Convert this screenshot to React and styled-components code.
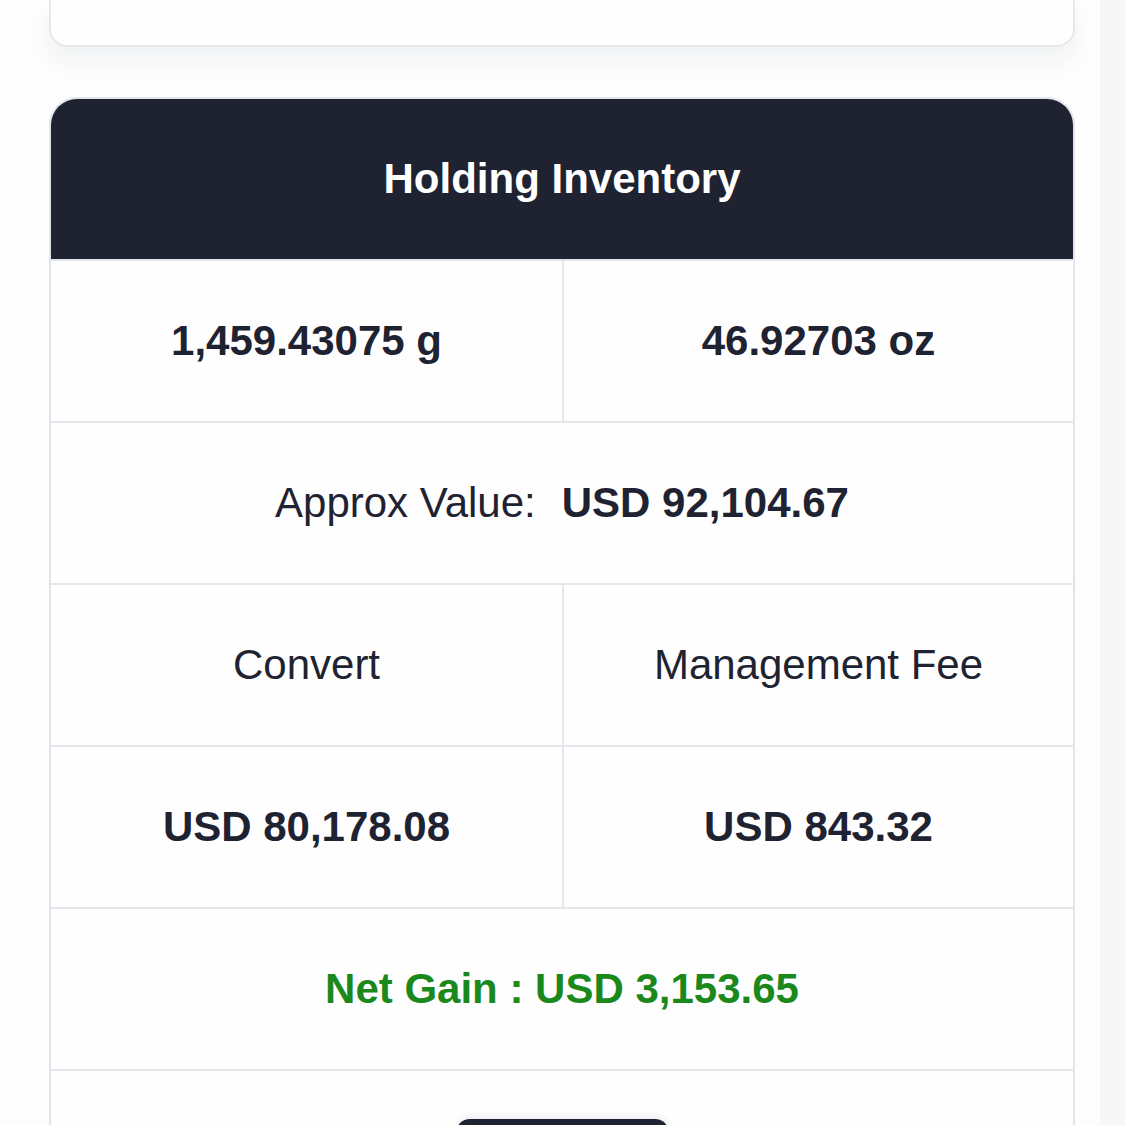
import React from 'react';
import styled, { createGlobalStyle } from 'styled-components';

const GlobalStyle = createGlobalStyle`
  html, body {
    margin: 0;
    padding: 0;
    background: #fdfdfd;
    font-family: "Liberation Sans", Arial, Helvetica, sans-serif;
    color: #1f2331;
  }
  #root {
    height: 1125px;
    overflow: hidden;
  }
`;

const Page = styled.div`
  display: flex;
  height: 1125px;
`;

const Main = styled.div`
  width: 1100px;
  padding: 0 25px 0 49px;
  box-sizing: border-box;
  display: flex;
  flex-direction: column;
`;

const SideStrip = styled.div`
  flex: 1;
  background: #f7f7f8;
`;

const TopCard = styled.div`
  flex: none;
  height: 47px;
  background: #fefefe;
  border: 2px solid #e6e8ec;
  border-top: none;
  border-radius: 0 0 18px 18px;
  box-sizing: border-box;
  box-shadow: 0 14px 22px rgba(20, 30, 50, 0.05);
`;

const InventoryCard = styled.div`
  margin-top: 50px;
  border: 2px solid #e2e5eb;
  border-bottom: none;
  border-radius: 28px 28px 0 0;
  overflow: hidden;
  background: #fefefe;
`;

const Header = styled.div`
  height: 160px;
  background: #1f2331;
  display: flex;
  align-items: center;
  justify-content: center;
  border-bottom: 2px solid #dfe3ec;
`;

const HeaderTitle = styled.h2`
  margin: 0;
  color: #ffffff;
  font-size: 42px;
  font-weight: 700;
`;

const Row = styled.div`
  display: grid;
  grid-template-columns: ${({ split }) => (split ? '1fr 1fr' : '1fr')};
  border-bottom: 2px solid #e3e6eb;
`;

const Cell = styled.div`
  height: 160px;
  display: flex;
  align-items: center;
  justify-content: center;
  font-size: 42px;
  font-weight: ${({ bold }) => (bold ? 700 : 400)};
  color: ${({ tone }) => (tone === 'green' ? '#1b881c' : '#1f2331')};
  & + & {
    border-left: 2px solid #e3e6eb;
  }
`;

const Label = styled.span`
  font-weight: 400;
  margin-right: 26px;
`;

const Value = styled.span`
  font-weight: 700;
`;

const ActionRow = styled.div`
  display: flex;
  justify-content: center;
  padding-top: 48px;
  height: 120px;
`;

const ActionButton = styled.button`
  width: 213px;
  height: 56px;
  border: none;
  border-radius: 14px;
  background: #1f2331;
  box-shadow: 0 -4px 6px rgba(20, 30, 50, 0.06);
`;

const rows = [
  { cells: [{ text: 'Convert' }, { text: 'Management Fee' }] },
  { cells: [{ text: 'USD 80,178.08', bold: true }, { text: 'USD 843.32', bold: true }] },
];

const App = () => (
  <>
    <GlobalStyle />
    <Page>
      <Main>
        <TopCard />
        <InventoryCard>
          <Header>
            <HeaderTitle>Holding Inventory</HeaderTitle>
          </Header>
          <Row split>
            <Cell bold>1,459.43075 g</Cell>
            <Cell bold>46.92703 oz</Cell>
          </Row>
          <Row>
            <Cell>
              <Label>Approx Value:</Label>
              <Value>USD 92,104.67</Value>
            </Cell>
          </Row>
          {rows.map((row) => (
            <Row split key={row.cells[0].text}>
              {row.cells.map((c) => (
                <Cell bold={c.bold} key={c.text}>
                  {c.text}
                </Cell>
              ))}
            </Row>
          ))}
          <Row>
            <Cell bold tone="green">Net Gain : USD 3,153.65</Cell>
          </Row>
          <ActionRow>
            <ActionButton aria-label="action" />
          </ActionRow>
        </InventoryCard>
      </Main>
      <SideStrip />
    </Page>
  </>
);

export default App;
